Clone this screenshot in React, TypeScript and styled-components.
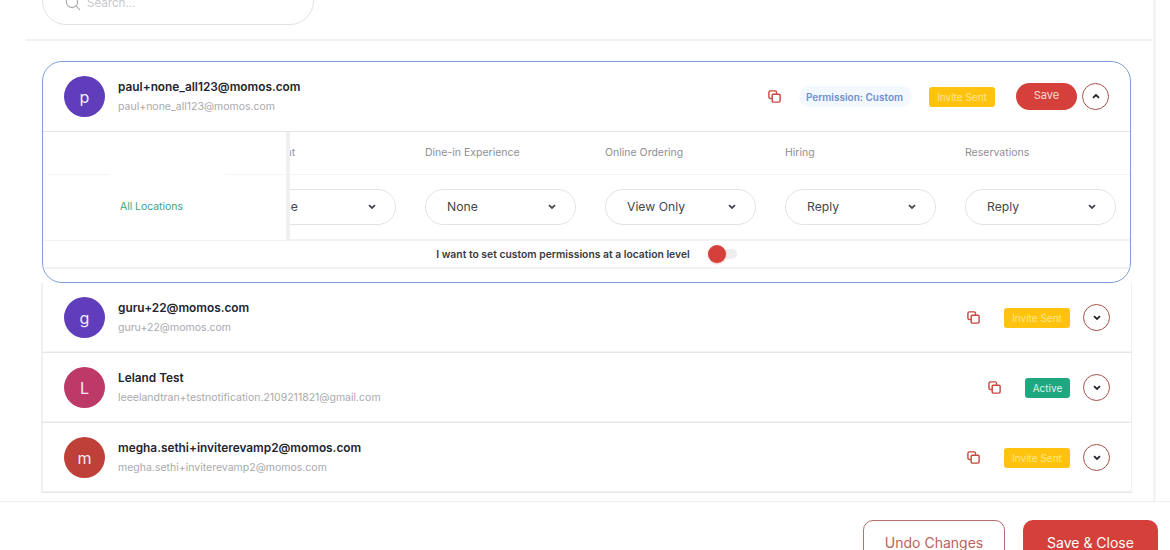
import React from "react";
import styled, { createGlobalStyle } from "styled-components";

const Global = createGlobalStyle`
  html, body { margin: 0; padding: 0; background: #fff; }
  body { font-family: "Inter", "Liberation Sans", sans-serif; color: #24242c; }
`;

const Page = styled.div`
  width: 1170px; height: 550px; overflow: hidden;
  display: flex; flex-direction: column; background: #fff;
`;
const Scroll = styled.div`
  width: 1156px; height: 501px; overflow: hidden; flex: none; box-sizing: border-box;
  border-right: 3px solid #f4f4f5;
`;
const SearchArea = styled.div`
  margin: -23px 1px 0 26px; height: 64px; box-sizing: border-box;
  border-bottom: 2px solid #f2f2f3; padding-left: 16px;
`;
const SearchBox = styled.div`
  width: 272px; height: 48px; box-sizing: border-box;
  border: 1px solid #e2e2e4; border-radius: 24px;
  display: flex; align-items: center; gap: 6px; padding: 3px 0 0 22px;
  color: #c9c9cd; font-size: 11.6px;
`;
const List = styled.div`
  margin: 20px 21px 0 41px; display: flex; flex-direction: column;
`;
const Card = styled.div`
  margin: 0 1px; height: 222px; box-sizing: border-box;
  border: 1px solid #7f9fd4; border-radius: 20px; overflow: hidden;
  display: flex; flex-direction: column; flex: none;
`;
const CardHead = styled.div`
  height: 70px; flex: none; box-sizing: border-box;
  border-bottom: 1px solid #e6e6e9;
  display: flex; align-items: center; padding: 0 21px 0 21px;
`;
const Row = styled.div`
  height: 70px; flex: none; box-sizing: border-box;
  border-bottom: 1px solid #e6e6e8; box-shadow: 0 -1px 0 #f3f3f4 inset;
  border-left: 2px solid #f0f0f1; border-right: 1px solid #f0f0f1;
  display: flex; align-items: center; padding: 0 21px 0 21px;
`;
const Avatar = styled.div<{ $bg: string }>`
  width: 41px; height: 41px; border-radius: 50%; background: ${p => p.$bg};
  color: #f4ecf4; font-size: 16px; display: flex; align-items: center; justify-content: center;
  flex: none; margin-right: 13px;
`;
const Who = styled.div`
  display: flex; flex-direction: column; gap: 3px; flex: 1; min-width: 0;
`;
const Name = styled.div`
  font-size: 11.85px; font-weight: 600; color: #24242e; line-height: 18px; white-space: nowrap;
`;
const Email = styled.div`
  font-size: 10.5px; color: #a9a9ae; line-height: 16px; white-space: nowrap;
`;
const CopyBtn = styled.button<{ $mr: number }>`
  width: 13px; height: 13px; padding: 0; border: 0; background: none; color: #c7453c;
  margin-right: ${p => p.$mr}px; display: block; flex: none;
`;
const Perm = styled.div`
  height: 21px; width: 113px; border-radius: 11px; background: #f2f8fd; color: #6f8fd0;
  font-size: 10px; font-weight: 600; display: flex; align-items: center; justify-content: center;
  margin-right: 17px; padding-right: 2px; box-sizing: border-box; white-space: nowrap;
`;
const Badge = styled.div<{ $bg: string; $w: number; $fg: string }>`
  height: 20px; width: ${p => p.$w}px; border-radius: 3px; background: ${p => p.$bg}; color: ${p => p.$fg};
  font-size: 10px; display: flex; align-items: center; justify-content: center; white-space: nowrap; flex: none;
`;
const SaveBtn = styled.button`
  width: 61px; height: 27px; border-radius: 14px; border: 0; background: #d6403a; color: #f7dcd9;
  font: 400 11px "Inter", sans-serif; margin-left: 21px; padding: 0 0 3px; flex: none;
`;
const Round = styled.button`
  width: 27px; height: 27px; border-radius: 50%; border: 1px solid #a8504a; background: #fff;
  margin-left: 5px; padding: 0; display: flex; align-items: center; justify-content: center;
  color: #24242e; flex: none;
`;
const RowRound = styled(Round)`
  margin-left: 13px;
`;
const Matrix = styled.div`
  position: relative; height: 107px; flex: none; border-bottom: 2px solid #f2f2f3;
  box-sizing: content-box;
`;
const HeadLine = styled.div`
  height: 43px; box-sizing: border-box; border-bottom: 1px solid #f3f3f4;
  display: grid; grid-template-columns: repeat(5, 180px); padding: 0 0 2px 202px;
  align-items: center; font-size: 10.5px; color: #8f8f94; white-space: nowrap;
`;
const SelectLine = styled.div`
  height: 62px; box-sizing: border-box; display: grid; grid-template-columns: repeat(5, 180px);
  padding: 1px 0 0 202px; align-items: center;
`;
const Select = styled.div`
  width: 151px; height: 36px; box-sizing: border-box; border: 1px solid #e2e2e4; border-radius: 18px;
  display: flex; align-items: center; justify-content: space-between; padding: 0 18px 0 21px;
  font-size: 12.2px; color: #46464e;
`;
const Sticky = styled.div`
  position: absolute; left: 0; top: 0; bottom: -1px; width: 243px; background: #fff;
  border-right: 4px solid #f0f0f1; display: flex; flex-direction: column;
`;
const StickyHead = styled.div`
  height: 43px; flex: none; box-sizing: border-box; position: relative;
  &::before, &::after { content: ""; position: absolute; bottom: 0; height: 1px; background: #f5f5f6; }
  &::before { left: 5px; width: 62px; }
  &::after { left: 182px; width: 61px; }
`;
const StickyCell = styled.div`
  flex: 1; display: flex; align-items: center; padding: 0 0 3px 77px;
  font-size: 10.4px; color: #3f9f7e;
`;
const ToggleLine = styled.div`
  height: 28px; flex: none; box-sizing: border-box; border-bottom: 2px solid #f2f2f3;
  display: flex; align-items: center; justify-content: center; gap: 18px;
  font-size: 10.35px; font-weight: 600; color: #3a3a42;
`;
const Track = styled.div`
  width: 29px; height: 10px; border-radius: 5px; background: #eeeeef; position: relative; flex: none;
`;
const Knob = styled.div`
  position: absolute; left: 0; top: -4px; width: 18px; height: 18px; border-radius: 50%;
  background: #d6403a; box-shadow: 0 1px 2px rgba(214,64,58,.35);
`;
const Footer = styled.div`
  flex: 1; display: flex; justify-content: flex-end; gap: 18px; padding: 18px 12px 0 0; overflow: hidden;
  border-top: 1px solid #eeeeef;
`;
const Undo = styled.button`
  width: 142px; height: 44px; flex: none; border: 1px solid #b5706b; border-radius: 10px; background: #fff; color: #b8635d;
  font: 400 14px "Inter", sans-serif; padding: 0;
`;
const SaveClose = styled.button`
  width: 135px; height: 44px; flex: none; border: 0; border-radius: 10px; background: #d6403a; color: #fff;
  font: 400 14px "Inter", sans-serif; padding: 0;
`;

const Copy = () => (
  <svg width="13" height="13" viewBox="0 0 13 13" fill="none" stroke="currentColor" strokeWidth="1.4">
    <path d="M8.5 3.8V2.2A1.4 1.4 0 0 0 7.1.9H2.3A1.4 1.4 0 0 0 .9 2.2v4.9a1.4 1.4 0 0 0 1.4 1.4h1.5" />
    <rect x="4.2" y="4.2" width="7.9" height="7.9" rx="1.1" />
  </svg>
);
const Chev = ({ up }: { up?: boolean }) => (
  <svg width="10" height="7" viewBox="0 0 10 7" fill="none" stroke="currentColor" strokeWidth="1.8">
    <path d={up ? "M2 4.8 5 2l3 2.8" : "M2 2.2 5 5l3-2.8"} />
  </svg>
);
const SearchIcon = () => (
  <svg width="16" height="16" viewBox="0 0 16 16" fill="none" stroke="#a8a8ad" strokeWidth="1.1">
    <circle cx="7" cy="7" r="5.6" />
    <path d="m11.2 11.2 3.6 3.6" />
  </svg>
);

const cols = [
  { h: "Complaint", v: "None" },
  { h: "Dine-in Experience", v: "None" },
  { h: "Online Ordering", v: "View Only" },
  { h: "Hiring", v: "Reply" },
  { h: "Reservations", v: "Reply" },
];
const GOLD = "#ffc20e";
const rows = [
  { l: "g", bg: "#5f3dbb", n: "guru+22@momos.com", e: "guru+22@momos.com", b: "Invite Sent", c: GOLD, f: "#ffe68f", w: 66, mr: 24 },
  { l: "L", bg: "#bd3a68", n: "Leland Test", e: "leeelandtran+testnotification.2109211821@gmail.com", b: "Active", c: "#1fa77f", f: "#d9f5ea", w: 45, mr: 24 },
  { l: "m", bg: "#bf4038", n: "megha.sethi+inviterevamp2@momos.com", e: "megha.sethi+inviterevamp2@momos.com", b: "Invite Sent", c: GOLD, f: "#ffe68f", w: 66, mr: 24 },
];

export default function App() {
  return (
    <Page>
      <Global />
      <Scroll>
        <SearchArea>
          <SearchBox><SearchIcon />Search...</SearchBox>
        </SearchArea>
        <List>
          <Card>
            <CardHead>
              <Avatar $bg="#5f3dbb">p</Avatar>
              <Who>
                <Name>paul+none_all123@momos.com</Name>
                <Email>paul+none_all123@momos.com</Email>
              </Who>
              <CopyBtn $mr={18}><Copy /></CopyBtn>
              <Perm>Permission: Custom</Perm>
              <Badge $bg={GOLD} $fg="#ffe68f" $w={66}>Invite Sent</Badge>
              <SaveBtn>Save</SaveBtn>
              <Round><Chev up /></Round>
            </CardHead>
            <Matrix>
              <HeadLine>{cols.map(c => <div key={c.h}>{c.h}</div>)}</HeadLine>
              <SelectLine>
                {cols.map(c => (
                  <Select key={c.h}>{c.v}<Chev /></Select>
                ))}
              </SelectLine>
              <Sticky>
                <StickyHead />
                <StickyCell>All Locations</StickyCell>
              </Sticky>
            </Matrix>
            <ToggleLine>
              I want to set custom permissions at a location level
              <Track><Knob /></Track>
            </ToggleLine>
          </Card>
          {rows.map(r => (
            <Row key={r.n}>
              <Avatar $bg={r.bg}>{r.l}</Avatar>
              <Who>
                <Name>{r.n}</Name>
                <Email>{r.e}</Email>
              </Who>
              <CopyBtn $mr={r.mr}><Copy /></CopyBtn>
              <Badge $bg={r.c} $fg={r.f} $w={r.w}>{r.b}</Badge>
              <RowRound><Chev /></RowRound>
            </Row>
          ))}
        </List>
      </Scroll>
      <Footer>
        <Undo>Undo Changes</Undo>
        <SaveClose>Save &amp; Close</SaveClose>
      </Footer>
    </Page>
  );
}
